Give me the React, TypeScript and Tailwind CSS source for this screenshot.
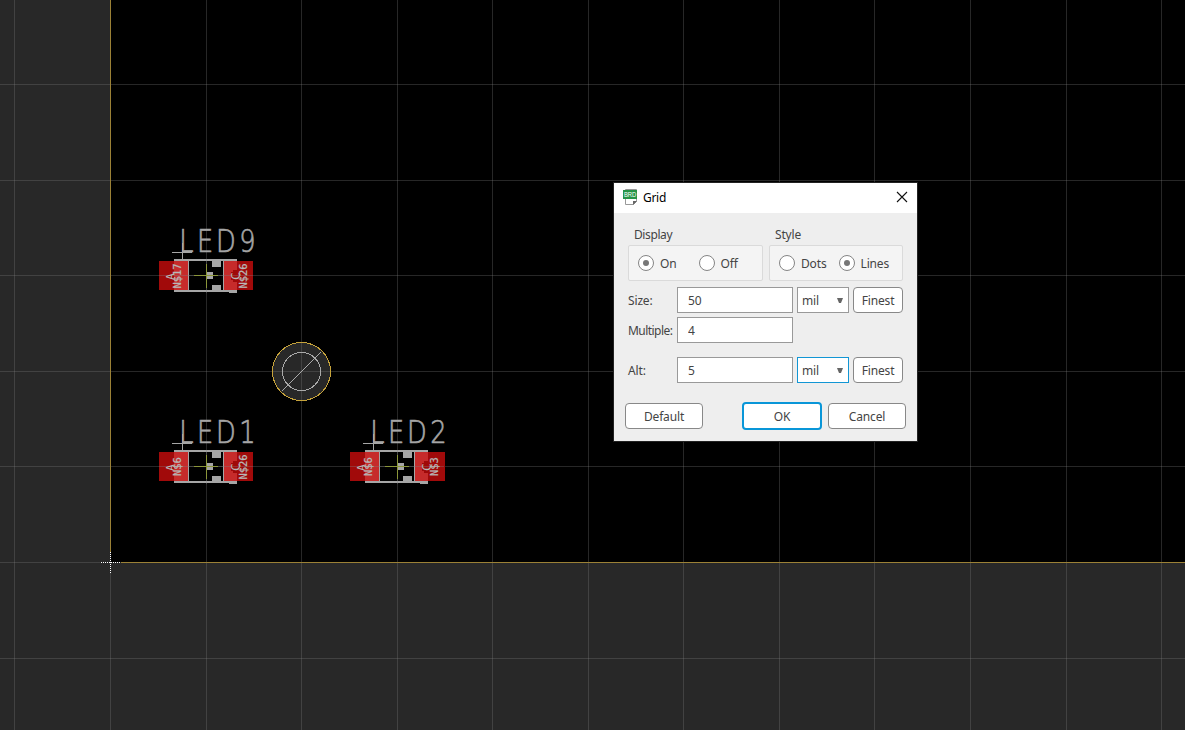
import React, { useState } from "react";

const gridX = [14, 110, 206, 301, 397, 492, 588, 683, 779, 874, 970, 1066, 1161];
const gridY = [84, 180, 275, 371, 466, 562, 658];

type LedProps = { x: number; y: number; name: string; left: string; right: string; wide?: number };

function Led({ x, y, name, left, right, wide = 0 }: LedProps) {
  const mono = "'DejaVu Sans Mono', monospace";
  return (
    <g transform={`translate(${x - 206} ${y - 275})`}>
      <g shapeRendering="crispEdges">
        <rect x="159" y="261" width="30" height="29" fill="#a10a0a" />
        <rect x="224" y="261" width={29 + wide} height="29" fill="#a10a0a" />
        <rect x="174" y="261" width="14" height="29" fill="#c62b2b" />
        <rect x="224" y="261" width="13" height="29" fill="#c62b2b" />
        <path d="M231 272h2v-2h4v12h-4v-2h-2z" fill="#9f0909" />
        <g fill="#a6a6a6">
          <rect x="174" y="259" width="63" height="2" />
          <rect x="174" y="290" width="63" height="2" />
          <rect x="229" y="291" width="8" height="2" />
          <rect x="188" y="261" width="1" height="29" />
          <rect x="223" y="261" width="1" height="29" />
          <rect x="212" y="260" width="9" height="7" />
          <rect x="207" y="272" width="6" height="7" />
          <rect x="212" y="285" width="9" height="7" />
          <rect x="172" y="252" width="20" height="1" />
          <rect x="182" y="243" width="1" height="18" />
        </g>
        <rect x="159" y="275" width="94" height="1" fill="#808080" fillOpacity=".35" />
        <rect x="206" y="259" width="1" height="34" fill="#808080" fillOpacity=".35" />
        <rect x="194" y="275" width="24" height="1" fill="#8b9639" />
        <rect x="206" y="264" width="1" height="24" fill="#8b9639" />
      </g>
      <g fill="#b8b8b8" fontFamily={mono}>
        <text
          transform="translate(180 251.5) scale(.79 1)"
          x="-1 21.5 45.5 75"
          fontSize="32.5"
          fontFamily="'DejaVu Sans Light', 'DejaVu Sans', sans-serif"
          fontWeight="200"
          fill="#a6a6a6"
          stroke="#a6a6a6"
          strokeWidth=".7"
        >
          {name}
        </text>
        <text transform="translate(174 280) rotate(-90)" fontSize="11">A</text>
        <text transform="translate(240 280) rotate(-90)" fontSize="13">C</text>
        <text transform={`translate(181 ${left.length === 4 ? 288.5 : 285}) rotate(-90)`} fontSize="10.5" stroke="#b8b8b8" strokeWidth=".25" textLength={left.length * 6.3}>{left}</text>
        <text transform={`translate(${right.length === 4 ? 247 : 247} ${right.length === 4 ? 288.5 : 285}) rotate(-90)`} fontSize="10.5" stroke="#b8b8b8" strokeWidth=".25" textLength={right.length * 6.3}>{right}</text>
      </g>
    </g>
  );
}

function Board() {
  return (
    <svg width="1185" height="730" className="absolute inset-0 block">
      <rect width="1185" height="730" fill="#282828" />
      <rect x="110" width="1075" height="562" fill="#000" />
      <circle cx="301.5" cy="371.5" r="29" fill="#282828" />
      <g fill="#808080" fillOpacity=".3" shapeRendering="crispEdges">
        {gridX.map((v) => <rect key={v} x={v} width="1" height="730" />)}
        {gridY.map((v) => <rect key={v} y={v} width="1185" height="1" />)}
      </g>
      <path d="M110.5 0V562.5H1185" fill="none" stroke="#9b8136" shapeRendering="crispEdges" />
      <path d="M110.5 552v21M100 562.5h21" stroke="#282828" shapeRendering="crispEdges" />
      <path d="M110.5 552v21M101 562.5h20" stroke="#fff" strokeDasharray="1 1" shapeRendering="crispEdges" />
      <g fill="none" shapeRendering="crispEdges">
        <circle cx="301.5" cy="371.5" r="29" stroke="#c6a33b" />
        <circle cx="301.5" cy="371.5" r="19" stroke="#aaa" />
        <path d="M282 391L321 352" stroke="#aaa" />
      </g>
      <Led x={206} y={275} name="LED9" left="N$17" right="N$26" />
      <Led x={206} y={466} name="LED1" left="N$6" right="N$26" />
      <Led x={397} y={466} name="LED2" left="N$6" right="N$3" wide={1} />
    </svg>
  );
}

function Radio({ on, label, onClick }: { on: boolean; label: string; onClick: () => void }) {
  return (
    <button onClick={onClick} className="flex items-center gap-[6px]">
      <span className="flex size-4 items-center justify-center rounded-full border border-[#858585] bg-white">
        {on && <span className="size-[6px] rounded-full bg-[#777]" />}
      </span>
      <span className="pt-px">{label}</span>
    </button>
  );
}

function Unit({ active = false }: { active?: boolean }) {
  return (
    <button className={`ml-1 flex h-[26px] w-[52px] items-center justify-between border bg-white pr-[5px] pl-[4px] ${active ? "border-[#1296d4]" : "border-[#999]"}`}>
      <span className="pt-px">mil</span>
      <svg width="6" height="5"><path d="M0 0h6L4 5H2z" fill="#666" /></svg>
    </button>
  );
}

function Field({ label, value, tight = false }: { label: string; value: string; tight?: boolean }) {
  return (
    <>
      <span className={`w-[49px] pt-px whitespace-nowrap ${tight ? "tracking-[-0.55px]" : ""}`}>{label}</span>
      <input defaultValue={value} className="h-[26px] w-[116px] border border-[#999] bg-white px-[10px] outline-none" />
    </>
  );
}

const finest = "ml-1 h-[26px] w-[50px] rounded-[4px] border border-[#888] bg-white pt-px";

export default function App() {
  const [display, setDisplay] = useState("On");
  const [style, setStyle] = useState("Lines");
  return (
    <main className="relative h-[730px] w-[1185px] overflow-hidden">
      <Board />
      <section className="absolute top-[183px] left-[614px] flex h-[258px] w-[303px] flex-col bg-[#eee] font-['Noto_Sans','Open_Sans',sans-serif] text-[12px] leading-4 tracking-[-0.15px] text-[#444] shadow-[0_0_0_1px_#222]">
        <header className="flex h-[30px] items-center bg-white pl-[9px] text-black">
          <svg width="15" height="17" viewBox="0 0 15 17" className="-mt-px">
            <path d="M2.5.5h11v12l-3 3h-8z" fill="#fff" stroke="#999" />
            <path d="M10 16v-4h4z" fill="#666" />
            <rect y="1" width="14" height="9" fill="#269447" />
            <text x="1" y="8" fontSize="7" textLength="12" lengthAdjust="spacingAndGlyphs" fill="#fff" fontFamily="'Liberation Sans', sans-serif">BRD</text>
          </svg>
          <h1 className="ml-[5px] flex-1 tracking-[-0.3px]">Grid</h1>
          <button aria-label="Close" className="mr-[9px] mb-[2px]">
            <svg width="12" height="12" className="block"><path d="M1 1l10 10M11 1L1 11" stroke="#111" strokeWidth="1.1" /></svg>
          </button>
        </header>
        <div className="flex gap-[6px] pt-[14px] pl-[14px]">
          <div className="w-[135px]">
            <div className="h-[18px] pl-[6px] tracking-[-0.4px]">Display</div>
            <div className="flex h-9 items-center gap-[22px] rounded-[2px] border border-[#dadada] bg-[#f4f4f4] pl-[9px]">
              <Radio on={display === "On"} label="On" onClick={() => setDisplay("On")} />
              <Radio on={display === "Off"} label="Off" onClick={() => setDisplay("Off")} />
            </div>
          </div>
          <div className="w-[134px]">
            <div className="h-[18px] pl-[6px]">Style</div>
            <div className="flex h-9 items-center gap-3 rounded-[2px] border border-[#dadada] bg-[#f4f4f4] pl-[9px]">
              <Radio on={style === "Dots"} label="Dots" onClick={() => setStyle("Dots")} />
              <Radio on={style === "Lines"} label="Lines" onClick={() => setStyle("Lines")} />
            </div>
          </div>
        </div>
        <div className="mt-[6px] flex items-center pl-[14px]">
          <Field label="Size:" value="50" />
          <Unit />
          <button className={finest}>Finest</button>
        </div>
        <div className="mt-1 flex items-center pl-[14px]">
          <Field label="Multiple:" value="4" tight />
        </div>
        <div className="mt-[14px] flex items-center pl-[14px]">
          <Field label="Alt:" value="5" />
          <Unit active />
          <button className={finest}>Finest</button>
        </div>
        <div className="mt-[19px] flex items-center pl-[11px]">
          <button className="h-[26px] w-[78px] rounded-[4px] border border-[#888] bg-white pt-px">Default</button>
          <button className="ml-[39px] h-7 w-20 rounded-[4px] border-2 border-[#0996d8] bg-white pt-px">OK</button>
          <button className="ml-[6px] h-[26px] w-[78px] rounded-[4px] border border-[#888] bg-white pt-px">Cancel</button>
        </div>
      </section>
    </main>
  );
}
